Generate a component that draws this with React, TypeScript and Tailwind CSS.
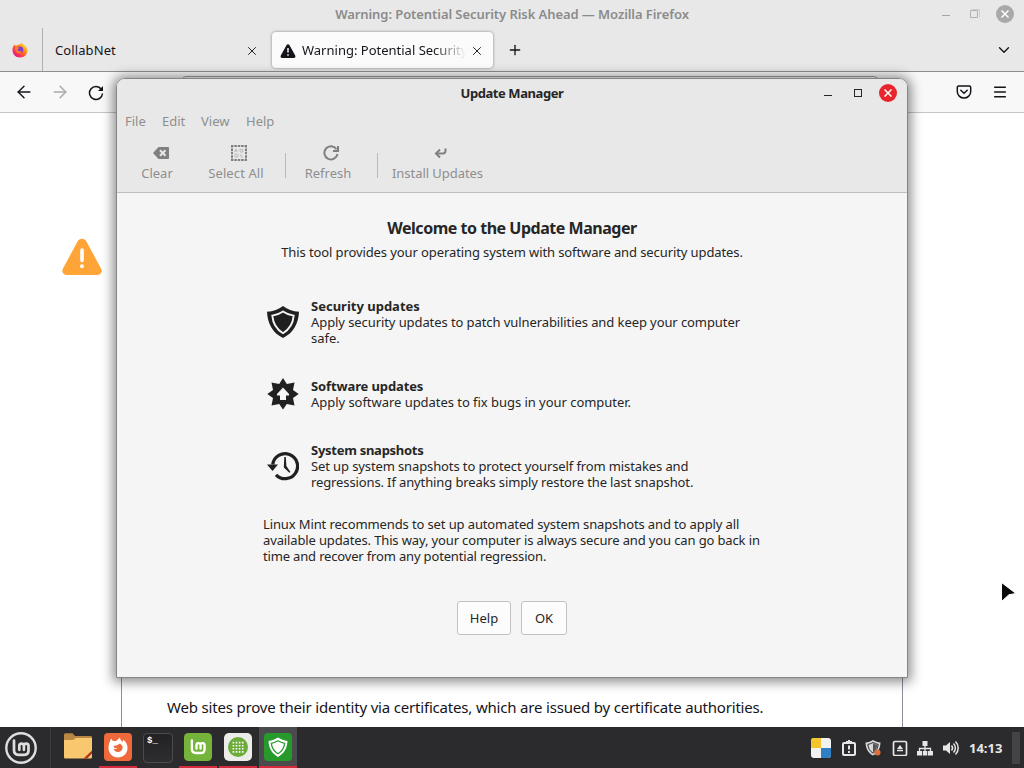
import type { ReactNode } from "react";
import { ArrowLeft, ArrowRight, ChevronDown, Menu, Plus, X } from "lucide-react";

function BrowserTitle() {
  return (
    <div className="relative flex h-7 items-center justify-center">
      <h1 className="pt-px text-[13px] font-semibold tracking-[-0.07px] whitespace-nowrap text-[#8b8b8b]">
        Warning: Potential Security Risk Ahead — Mozilla Firefox
      </h1>
      <div className="absolute top-[5px] right-[10px] flex items-center">
        <span className="mt-[3px] mr-5 h-px w-2 bg-[#a5a5a5]" />
        <svg className="mr-4 size-[10px]" viewBox="0 0 10 10" fill="none" stroke="#b0b0b0">
          <path d="M.5 1.500h7v7h-7z" />
          <path d="M2 .5h7.500v7.500" stroke="#cfcfcf" />
        </svg>
        <WindowClose className="bg-[#a9a9a9]" />
      </div>
    </div>
  );
}

function WindowClose({ className }: { className: string }) {
  return (
    <span className={`flex size-[18px] items-center justify-center rounded-full ${className}`}>
      <svg className="size-[8px]" viewBox="0 0 8 8" stroke="#fff" strokeWidth="1.500">
        <path d="M.5.5l7 7M7.500.5l-7 7" />
      </svg>
    </span>
  );
}

function FirefoxBall() {
  return (
    <svg className="size-4" viewBox="0 0 16 16">
      <defs>
        <linearGradient id="flame" x1="0.9" y1="0.1" x2="0.2" y2="0.9">
          <stop offset="0" stopColor="#fff14f" />
          <stop offset="0.4" stopColor="#ff8a16" />
          <stop offset="0.75" stopColor="#ff3b4b" />
          <stop offset="1" stopColor="#e31587" />
        </linearGradient>
      </defs>
      <path
        d="M1.200 4.500 2.300 2.600 3.500 3.800 5.500 3.300C6.500 2.400 7 2.200 8 2.200L9.800.5C10.500 2.500 14.500 3 15.400 7.500 15.800 12 12.500 15.500 8 15.500S.4 12 .5 8C.5 6.500.7 5.500 1.200 4.500Z"
        fill="url(#flame)"
      />
      <circle cx="8" cy="7.800" r="3.300" fill="#7b3ed0" />
      <path d="M3 5c2-.8 3.500 0 4.800 1.200-1.500.2-2.300.8-2.300 1.800 1 1.500 3 1.500 4.500.5-.5 2.500-2.500 3.500-4.500 2.500C3.500 10 2.500 7.500 3 5Z" fill="#ff7a2c" />
    </svg>
  );
}

function TabBar() {
  return (
    <div className="flex h-[43px] items-stretch text-[13px] text-[#15141a]">
      <div className="flex w-[43px] items-center justify-center border-r border-[#b0b0b0] pt-px pr-[3px]">
        <FirefoxBall />
      </div>
      <div className="flex w-[229px] items-center justify-between pt-[2px] pr-[13px] pl-3">
        <span className="tracking-[0.100px]">CollabNet</span>
        <X className="size-[14px]" strokeWidth={1.600} />
      </div>
      <div className="mt-1 mb-[3px] flex w-[221px] items-center rounded bg-[#fbfbfb] pt-px pr-[9px] pl-2 shadow-[0_0_3px_rgba(0,0,0,0.450)]">
        <svg className="size-4 shrink-0" viewBox="0 0 16 16">
          <path d="M8 1.200c.6 0 1.100.3 1.400.8l5.800 10.500c.7 1.200-.1 2.500-1.400 2.500H2.200C.9 15 .1 13.700.8 12.500L6.600 2c.3-.5.8-.8 1.400-.8Z" fill="#15141a" />
          <path d="M8 5v4.500M8 11.300v1.400" stroke="#fff" strokeWidth="1.400" />
        </svg>
        <span className="ml-[6px] w-[164px] overflow-hidden mask-r-from-80% whitespace-nowrap">
          Warning: Potential Security
        </span>
        <X className="ml-1 size-[14px] shrink-0" strokeWidth={1.600} />
      </div>
      <Plus className="mt-[14px] ml-[14px] size-4" strokeWidth={2} />
      <ChevronDown className="mt-[13px] mr-[11px] ml-auto size-[18px]" strokeWidth={1.800} />
    </div>
  );
}

function NavBar() {
  return (
    <div className="flex h-[42px] items-center border-t border-b border-t-[#8f8f8f] border-b-[#c6c6c6] bg-[#f8f8f8] text-[#15141a]">
      <ArrowLeft className="ml-[14px] size-5" strokeWidth={1.700} />
      <ArrowRight className="ml-4 size-5 text-[#a9a9ab]" strokeWidth={1.700} />
      <svg className="mt-px ml-[18px] size-4" viewBox="0 0 16 16" fill="none" stroke="currentColor" strokeWidth="1.500">
        <path d="M13.300 4.200A6.500 6.500 0 1 0 14.500 8.500" />
        <path d="M15 1v5h-5Z" fill="currentColor" stroke="none" />
      </svg>
      <div className="ml-[78px] h-8 w-[696px] rounded border border-[#a0a0a0] bg-white" />
      <svg className="ml-auto size-4" viewBox="0 0 16 16" fill="none" stroke="currentColor" strokeWidth="1.500">
        <path d="M2.800 2h10.400c.9 0 1.500.6 1.500 1.400v4a6.700 6.700 0 0 1-13.400 0v-4C1.300 2.600 1.900 2 2.800 2Z" />
        <path d="M4.800 6.300 8 9.300l3.200-3" strokeLinecap="round" />
      </svg>
      <Menu className="mr-4 ml-5 size-4" strokeWidth={2.200} />
    </div>
  );
}

function WarningPage() {
  return (
    <div className="flex flex-1 items-stretch bg-white">
      <div className="w-[121px] pt-[125px] pl-[62px]">
        <svg className="h-[38px] w-10" viewBox="0 0 40 38">
          <path
            d="M20 .8c1.900 0 3.400.9 4.300 2.500L39 30.500c1.900 3.500-.3 6.500-4 6.500H5c-3.700 0-5.900-3-4-6.500L15.700 3.300C16.600 1.700 18.100.8 20 .8Z"
            fill="#ffa436"
          />
          <path d="M20 12v10.500" stroke="#fff" strokeWidth="3.600" strokeLinecap="round" />
          <circle cx="20" cy="28.200" r="2" fill="#fff" />
        </svg>
      </div>
      <div className="flex w-[782px] items-end border-x border-[#8f8f9d] pb-[10px] pl-[45px]">
        <p className="text-[15px] leading-5 tracking-[-0.183px] whitespace-nowrap text-[#15141a]">
          Web sites prove their identity via certificates, which are issued by certificate authorities.
        </p>
      </div>
    </div>
  );
}

function ToolButton({ label, className, children }: { label: string; className: string; children: ReactNode }) {
  return (
    <button className={`flex flex-col items-center gap-[3px] whitespace-nowrap ${className}`}>
      {children}
      <span className="leading-[18px]">{label}</span>
    </button>
  );
}

function Toolbar() {
  return (
    <div className="flex h-[57px] items-start border-b border-[#bdbdbd] pt-[9px] text-[13px] text-[#8e8e8e]">
      <ToolButton label="Clear" className="ml-[21px] w-[38px]">
        <svg className="ml-[7px] size-4" viewBox="0 0 16 16">
          <path d="M5.500 2H15c.6 0 1 .4 1 1v10c0 .6-.4 1-1 1H5.500L0 8Z" fill="#808080" />
          <path d="M7 5.200 12.500 10.800M12.500 5.200 7 10.800" stroke="#e8e8e8" strokeWidth="2" />
        </svg>
      </ToolButton>
      <ToolButton label="Select All" className="ml-[30px] w-[60px] tracking-[0.100px]">
        <svg className="ml-[6px] size-4" viewBox="0 0 16 16" fill="none" stroke="#808080">
          <path d="M0 1h16M0 15h16M1 0v16M15 0v16" strokeWidth="2" strokeDasharray="2.500 0.875" />
          <path d="M4 7V5l1-1 1 1v2M4 6h2M9 4v3h3V4.500H9M4 9h3v3H4zM10 9v3h2" stroke="#bcbcbc" />
        </svg>
      </ToolButton>
      <span className="mt-2 ml-[19px] h-[25px] w-px bg-[#b9b9b9]" />
      <ToolButton label="Refresh" className="ml-[17px] w-[50px]">
        <svg className="ml-[6px] size-4" viewBox="0 0 16 16" fill="none" stroke="#808080" strokeWidth="2">
          <path d="M13.500 4.200A6.600 6.600 0 1 0 14.500 9" />
          <path d="M10 6h5V1" />
        </svg>
      </ToolButton>
      <span className="mt-2 ml-[24px] h-[25px] w-px bg-[#b9b9b9]" />
      <ToolButton label="Install Updates" className="ml-[13px] w-[93px] tracking-[-0.050px]">
        <svg className="ml-[6px] size-4" viewBox="0 0 16 16" fill="none" stroke="#808080" strokeWidth="2">
          <path d="M12.500 3.500v2.300c0 1.800-.8 2.700-2.500 2.700H4" />
          <path d="M7 4.500 3 8.500l4 4" />
        </svg>
      </ToolButton>
    </div>
  );
}

function ShieldIcon() {
  return (
    <svg className="size-8" viewBox="0 0 32 32">
      <path d="M16 0c4.500 3.500 9.500 5.300 16 5.800C31.500 17.500 26.500 27 16 32 5.500 27 .5 17.500 0 5.800 6.500 5.300 11.500 3.500 16 0Z" fill="#202020" />
      <path d="M16 5.500c3.200 2.300 6.600 3.500 10.700 4.100C26 17.500 22.500 23.300 16 27.200 9.500 23.300 6 17.500 5.300 9.600 9.400 9 12.800 7.800 16 5.500Z" fill="#202020" stroke="#f5f5f5" strokeWidth="1.900" />
    </svg>
  );
}

function SoftwareIcon() {
  return (
    <svg className="size-8" viewBox="0 0 32 32">
      <path
        d="M16 0l3.800 6L27.500 4.500l-1.500 7.500L31.700 16l-5.700 4 1.500 7.500-7.700-1.500L16 31.500l-3.800-5.500L4.500 27.500 6 20 .3 16 6 12 4.500 4.500l7.700 1.500Z"
        fill="#202020"
      />
      <path d="M16 9.500l6 6.500v1.500H19V22h-6v-4.500h-3V16Z" fill="#f5f5f5" />
    </svg>
  );
}

function SnapshotIcon() {
  return (
    <svg className="size-8" viewBox="0 0 32 32" fill="none">
      <path d="M5.700 14.500A12.500 12.500 0 1 1 9 24.800" stroke="#202020" strokeWidth="3.200" />
      <path d="M0 14.500h11L5.500 21Z" fill="#202020" />
      <path d="M17.300 7h1.500l.6 9 4 6-1 .7-5.600-5.200Z" fill="#202020" />
    </svg>
  );
}

function Feature({ icon, title, className, children }: { icon: ReactNode; title: ReactNode; className: string; children: ReactNode }) {
  return (
    <div className={`flex items-center gap-3 ${className}`}>
      {icon}
      <div className="whitespace-nowrap">
        <h3 className="font-bold">{title}</h3>
        {children}
      </div>
    </div>
  );
}

function UpdateManager() {
  return (
    <div className="absolute top-[78px] left-[116px] flex h-[600px] w-[792px] flex-col overflow-hidden rounded-t-[9px] border border-[#858585] bg-[#f5f5f5] text-[13px] text-[#262626]">
      <div className="bg-[#e8e8e8]">
        <div className="relative flex h-[29px] items-center justify-center">
          <h2 className="font-bold tracking-[-0.430px] whitespace-nowrap">Update Manager</h2>
          <div className="absolute top-[5px] right-[10px] flex items-center">
            <span className="mt-[5px] mr-[22px] h-px w-2 bg-[#262626]" />
            <span className="mr-[17px] size-2 border border-[#262626]" />
            <WindowClose className="bg-[#e8252c]" />
          </div>
        </div>
        <div className="flex h-[28px] items-center pl-2 text-[#8e8e8e]">
          <span className="w-[37px]">File</span>
          <span className="w-[39px]">Edit</span>
          <span className="w-[45px]">View</span>
          <span>Help</span>
        </div>
        <Toolbar />
      </div>
      <div className="flex flex-col items-center pt-[25px] leading-4">
        <h2 className="text-base leading-5 font-bold tracking-[-0.480px] whitespace-nowrap">Welcome to the Update Manager</h2>
        <p className="mt-[6px] tracking-[-0.100px] whitespace-nowrap">
          This tool provides your operating system with software and security updates.
        </p>
      </div>
      <div className="ml-[150px] flex flex-col pt-[38px] leading-4">
        <Feature icon={<ShieldIcon />} title="Security updates" className="h-12">
          <p className="tracking-[-0.085px]">Apply security updates to patch vulnerabilities and keep your computer</p>
          <p>safe.</p>
        </Feature>
        <Feature
          icon={<SoftwareIcon />}
          title={<span className="tracking-[-0.120px]">Software updates</span>}
          className="mt-8 h-8"
        >
          <p className="tracking-[-0.040px]">Apply software updates to fix bugs in your computer.</p>
        </Feature>
        <Feature
          icon={<SnapshotIcon />}
          title={<span className="tracking-[-0.270px]">System snapshots</span>}
          className="mt-8 h-12"
        >
          <p className="tracking-[-0.115px]">Set up system snapshots to protect yourself from mistakes and</p>
          <p className="tracking-[-0.120px]">regressions. If anything breaks simply restore the last snapshot.</p>
        </Feature>
      </div>
      <div className="mt-[26px] ml-[146px] leading-4 whitespace-nowrap">
        <p className="tracking-[-0.120px]">Linux Mint recommends to set up automated system snapshots and to apply all</p>
        <p className="tracking-[-0.134px]">available updates. This way, your computer is always secure and you can go back in</p>
        <p className="tracking-[-0.165px]">time and recover from any potential regression.</p>
      </div>
      <div className="mt-[37px] flex justify-center gap-[10px]">
        <button className="h-[34px] w-[54px] rounded-[3px] border border-[#c2c2c2] bg-[#fcfcfc] pt-[2px]">Help</button>
        <button className="h-[34px] w-[46px] rounded-[3px] border border-[#c2c2c2] bg-[#fcfcfc] pt-[2px]">OK</button>
      </div>
    </div>
  );
}

function MintGlyph() {
  return (
    <path
      d="M9 8.500V18c0 3 1.500 4.800 4.500 4.800h5.700c2.800 0 4.300-1.800 4.300-4.300v-4.700c0-3-4.600-3-4.600 0v4m0-4c0-3-4.600-3-4.600 0v4"
      fill="none"
      strokeWidth="2.700"
      strokeLinecap="round"
    />
  );
}

function TaskItem({ children, className }: { children: ReactNode; className?: string }) {
  return <div className={`flex h-[41px] w-[38px] items-center justify-center ${className ?? ""}`}>{children}</div>;
}

function Taskbar() {
  return (
    <div className="flex h-[41px] items-center bg-[#2b2b2d]">
      <svg className="ml-[5px] size-8" viewBox="0 0 32 32" stroke="#dedede">
        <circle cx="16" cy="16" r="14.700" fill="none" strokeWidth="2.400" />
        <MintGlyph />
      </svg>
      <span className="ml-[13px] h-[41px] w-px bg-[#3d3d3f]" />
      <div className="ml-2 flex gap-[2px]">
        <TaskItem>
          <svg className="mb-[3px] size-[30px]" viewBox="0 0 30 30">
            <path d="M1 4c0-1 .6-1.700 1.500-1.700h7L12 5h15.500c1 0 1.500.6 1.500 1.500V22H1Z" fill="#b98845" />
            <path d="M1 9h9l3-2h16v19c0 1-.6 1.500-1.500 1.500h-25C1.600 27.500 1 27 1 26Z" fill="#f8c76e" />
            <path d="M29 19.500v3L24 27.500h-3.500Z" fill="#b2311f" />
          </svg>
        </TaskItem>
        <TaskItem className="border-b-2 border-[#d5293e]">
          <svg className="size-7" viewBox="0 0 28 28">
            <rect width="28" height="28" rx="4" fill="#f0693a" />
            <path
              d="M5.500 9.500 7 5.500l2 2.500h3l4-3.500c0 2 1 3 3 4.500V6.500c3 2 4.500 5 4.500 8.500 0 5.500-4.300 9.500-9.500 9.500S4.500 20.500 4.500 15c0-2 .3-4 1-5.500Z"
              fill="#fff"
            />
            <path d="M16 10.500c2 1.500 3 3 2.500 5-.5 2.200-2.300 3.500-4.500 3.500-2.500 0-4-1.500-4.500-3.500 1.500 1 3 .5 4-.5h-3l-1-2 3.500-.8Z" fill="#f0693a" />
          </svg>
        </TaskItem>
        <TaskItem>
          <div className="flex size-[30px] rounded border border-[#4b4b4d] bg-linear-to-b from-[#222224] to-[#2e2e30] pt-px pl-[3px] font-['Liberation_Mono'] text-[9px] leading-3 font-bold text-white">
            $_
          </div>
        </TaskItem>
        <TaskItem className="border-b-2 border-[#d5293e]">
          <svg className="size-7" viewBox="0 0 32 32" stroke="#fff">
            <rect width="32" height="32" rx="5" fill="#74b43b" stroke="none" />
            <MintGlyph />
          </svg>
        </TaskItem>
        <TaskItem className="border-b-2 border-[#d5293e]">
          <svg className="size-7" viewBox="0 0 28 28">
            <rect width="28" height="28" rx="5" fill="#ececea" />
            <circle cx="14" cy="14" r="10" fill="#6bab38" />
            <path
              d="M8.600 9.600h12M8.600 12.700h12M8.600 15.800h12M8.600 18.900h12"
              stroke="#fff"
              strokeWidth="1.600"
              strokeDasharray="1.600 1.500"
            />
          </svg>
        </TaskItem>
        <TaskItem className="border-b-2 border-[#d5293e] bg-[#4b4b4d]">
          <svg className="size-7" viewBox="0 0 28 28">
            <rect width="28" height="28" rx="4" fill="#289a2c" />
            <path d="M14 4.500c3 2 6 3 9.500 3.500-.4 7.500-3.500 12.500-9.500 16-6-3.500-9.100-8.500-9.500-16C8 7.500 11 6.500 14 4.500Z" fill="#fff" />
            <path d="M14 7.800c2.300 1.400 4.300 2 6.700 2.500-.6 4.700-2.700 8-6.700 10.500-4-2.500-6.100-5.800-6.700-10.500 2.400-.5 4.400-1.100 6.700-2.500Z" fill="#fff" stroke="#289a2c" strokeWidth="1.200" />
          </svg>
        </TaskItem>
      </div>
      <div className="ml-auto flex items-center text-[#e6e6e6]">
        <svg className="size-5" viewBox="0 0 20 20">
          <rect width="20" height="20" rx="3" fill="#f2f2f0" />
          <path d="M3 0h7v10H0V3a3 3 0 0 1 3-3Z" fill="#f5c52d" />
          <path d="M10 10h10v7a3 3 0 0 1-3 3h-7Z" fill="#2f7fc4" />
        </svg>
        <svg className="ml-[10px] size-4" viewBox="0 0 16 16" fill="none" stroke="currentColor" strokeWidth="2">
          <rect x="2" y="3" width="12" height="12" rx="1" />
          <path d="M5 2h6M8 0v3M8 5.500v4M8 11v2" />
        </svg>
        <svg className="ml-2 size-[18px]" viewBox="0 0 18 18">
          <path d="M8 1c2.500 1.500 4.800 2.300 7.500 2.500C15.300 9.500 13 14 8 16.500 3 14 .7 9.500.5 3.500 3.200 3.300 5.500 2.500 8 1Z" fill="#d8d8d8" />
          <path d="M8 3.500c1.800 1 3.400 1.600 5.200 1.900C12.800 9.500 11 12.300 8 14.200 5 12.300 3.200 9.500 2.800 5.400 4.600 5.100 6.200 4.500 8 3.500Z" fill="none" stroke="#2b2b2d" />
          <path d="M8 4.500v9c2.500-1.700 4-4.500 4.300-7.500Z" fill="#555" />
          <circle cx="12.500" cy="13.500" r="3" fill="#e0703a" />
        </svg>
        <svg className="ml-[9px] size-4" viewBox="0 0 16 16" fill="none" stroke="currentColor" strokeWidth="1.700">
          <rect x="1.500" y="1.500" width="13" height="14" rx="1.500" />
          <path d="M5 10.500h6" strokeWidth="1.500" />
          <path d="M8 5l3 4H5Z" fill="currentColor" stroke="none" />
        </svg>
        <svg className="ml-[9px] size-4" viewBox="0 0 16 16" fill="currentColor">
          <path d="M5.500 1h5v5h-5zM0 11h5v4.500H0zM5.800 11h4.500v4.500H5.800zM11 11h5v4.500h-5z" />
          <path d="M8 6v5M2.500 11V8.500h11V11" fill="none" stroke="currentColor" strokeWidth="1.300" />
        </svg>
        <svg className="ml-[10px] size-4" viewBox="0 0 16 16" fill="none" stroke="currentColor" strokeWidth="1.500">
          <path d="M0 5.500h3L7 2v12l-4-3.500H0Z" fill="currentColor" stroke="none" />
          <path d="M8.500 5.500c1.300 1.500 1.300 3.500 0 5M10.500 3.500c2.500 2.500 2.500 6.500 0 9M12.500 1.500c3.600 3.600 3.600 9.400 0 13" />
        </svg>
        <span className="ml-[10px] w-[34px] pt-[2px] text-[13px] font-bold whitespace-nowrap">14:13</span>
        <span className="mr-1 ml-[9px] h-8 w-2 bg-[#434345]" />
      </div>
    </div>
  );
}

export default function App() {
  return (
    <div className="relative flex h-[768px] w-[1024px] flex-col overflow-hidden bg-[#e8e8e8] font-['Noto_Sans',sans-serif]">
      <BrowserTitle />
      <TabBar />
      <NavBar />
      <WarningPage />
      <Taskbar />
      {/* soft shadow around the dialog */}
      <div className="absolute top-[78px] left-[116px] h-[600px] w-[792px] rounded-t-[9px] shadow-[0_1px_12px_3px_rgba(0,0,0,0.450)]" />
      <UpdateManager />
      <svg className="absolute top-[580px] left-[999px] h-6 w-5" viewBox="0 0 20 24">
        <path d="M2.500 2.500 17 13.500l-7 1.200-7.500 6.800Z" fill="#0a0a0a" stroke="#fff" strokeWidth="1" />
      </svg>
    </div>
  );
}
